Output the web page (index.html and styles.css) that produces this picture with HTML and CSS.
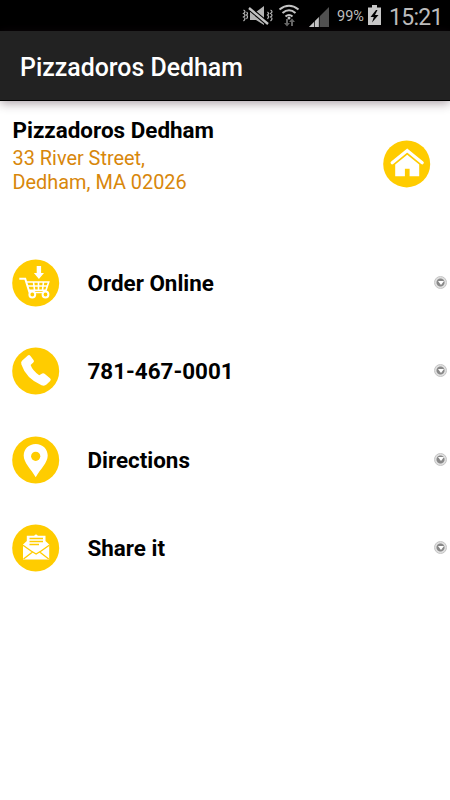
FILE: index.html
```html
<!DOCTYPE html>
<html lang="en">
<head>
<meta charset="utf-8">
<meta name="viewport" content="width=device-width">
<title>Pizzadoros Dedham</title>
<link rel="stylesheet" href="styles.css">
</head>
<body>
<div class="status">
  <svg class="signals" width="94" height="30" viewBox="240 0 94 30" aria-hidden="true">
    <g fill="none" stroke="#b5b5b5" stroke-width="1.2">
      <path d="M243.5 9q3 1.5 0 3.5 3 1.500 0 3.500 3 1.500 0 4M246.500 11q2 1.500 0 3 2 1.500 0 4M267.500 11q2 1.500 0 3 2 1.500 0 4M270.500 9q3 1.500 0 3.500 3 1.500 0 3.500 3 1.500 0 4"/>
    </g>
    <path fill="#b5b5b5" d="M250 11h6l8-6v19l-8-5h-6z"/>
    <path stroke="#000" stroke-width="4.5" d="M249 7l19 16"/>
    <path stroke="#c4c4c4" stroke-width="2.4" d="M249 7l19 16"/>
    <g fill="none" stroke="#c4c4c4" stroke-width="2.1">
      <path d="M279.500 8.500q9.500-7.500 19 0M282.500 12q6.500-5.500 13 0M285.500 15.500q3.500-3 7 0"/>
    </g>
    <circle cx="289" cy="17" r="1.500" fill="#c4c4c4"/>
    <path fill="#666" d="M286 18h2v4h2l-3 3.500-3-3.500h2zM291 25h2v-4h2l-3-3.500-3 3.500h2z"/>
    <path fill="#505050" d="M309 26l20-20v20z"/>
    <path fill="#c4c4c4" d="M309 26l10-10v10z"/>
    <path stroke="#000" stroke-width=".7" d="M314.500 20v6M319.300 15v11"/>
  </svg>
  <span class="percent">99%</span>
  <svg class="battery" width="13" height="21" viewBox="0 0 13 21" aria-hidden="true">
    <path fill="#c8c8c8" d="M4 0h5v2.500h4V20H0V2.500h4z"/>
    <path fill="#000" d="M8 5L2.500 12h3.300L4 17.500l6.500-7.500H7L9.500 5z"/>
  </svg>
  <span class="clock">15:21</span>
</div>
<header class="bar"><h1>Pizzadoros Dedham</h1></header>
<section class="place">
  <div class="address">
    <h2>Pizzadoros Dedham</h2>
    <p>33 River Street,<br>Dedham, MA 02026</p>
  </div>
  <svg class="icon home" viewBox="0 0 48 48" aria-label="Home">
    <circle cx="23.700" cy="23.900" r="23.500"/>
    <path class="line roof" d="M9.200 22.800L24.200 10.500 39.200 22.800"/>
    <path class="solid" d="M24.200 14.800L36.200 24.500V36.200H26.600V28.800H21.900V36.200H12.200V24.500z"/>
  </svg>
</section>
<main class="list">
  <a class="row">
    <svg class="icon" viewBox="0 0 48 48" aria-hidden="true">
      <circle cx="23.700" cy="24" r="23.500"/>
      <path class="solid" d="M24.700 7h4.400v7h2.900l-5.100 6-5-6h2.800z"/>
      <path class="line" d="M7.300 19.800h5.900L17.500 33.500"/>
      <path class="line cage" d="M14.500 23h22.200L34 31.200H17M16 27h19.500M21.500 23l1 8M26.500 23v8M31.500 23l-1 8M18 33.500h17"/>
      <circle class="wheel" cx="20.300" cy="35.500" r="2.900"/>
      <circle class="wheel" cx="33.500" cy="35.500" r="2.900"/>
    </svg>
    <span class="label">Order Online</span>
    <span class="more"><i></i></span>
  </a>
  <a class="row">
    <svg class="icon" viewBox="0 0 48 48" aria-hidden="true">
      <circle cx="23.700" cy="24" r="23.500"/>
      <path class="solid" d="M10 13.700L15.800 8.400Q17.300 7.300 18.500 8.900L21.700 13.200Q22.400 14.500 21.300 15.500L18.600 18Q20.500 23.500 27.200 28.300L30.200 26.500Q31.400 25.800 32.600 26.700L38 31.200Q39.500 32.500 38.200 33.900L34.500 37.600Q32.500 39.300 29.500 38.200 14 31.500 9.400 17.500 8.600 15 10 13.700z"/>
    </svg>
    <span class="label phone">781-467-0001</span>
    <span class="more"><i></i></span>
  </a>
  <a class="row">
    <svg class="icon" viewBox="0 0 48 48" aria-hidden="true">
      <circle cx="23.700" cy="24" r="23.500"/>
      <path class="solid" d="M23.700 8C16.800 8 11.700 13 11.700 19.600 11.700 27 19 33 23.700 41.300 28.400 33 35.700 27 35.700 19.600 35.700 13 30.600 8 23.700 8z"/>
      <circle cx="23.700" cy="20.300" r="4.600"/>
    </svg>
    <span class="label">Directions</span>
    <span class="more"><i></i></span>
  </a>
  <a class="row">
    <svg class="icon" viewBox="0 0 48 48" aria-hidden="true">
      <circle cx="23.700" cy="24" r="23.500"/>
      <path class="solid" d="M11 20.500L14.800 17V11.700H22l2-1.500 2 1.500h7.500V17l3.700 3.500V35.500H11z"/>
      <path class="mark" d="M17.500 14.500H31M17.500 17.500H31M17.500 20.500H27M11 21.200L20.500 28 11.500 35M37.200 21.200L27.700 28 36.700 35M20 27.500l4.100 2.500 4.100-2.500"/>
    </svg>
    <span class="label">Share it</span>
    <span class="more"><i></i></span>
  </a>
</main>
</body>
</html>
```

FILE: styles.css
```css
* { box-sizing: border-box; }
body {
  margin: 0;
  min-height: 800px;
  background: #fff;
  color: #000;
  font-family: Roboto, sans-serif;
}
h1, h2, p { margin: 0; }
.status {
  height: 31px;
  background: #000;
  color: #bcbcbc;
  display: flex;
  align-items: center;
  justify-content: flex-end;
  padding-right: 8px;
}
.percent { width: 28px; margin-left: 3px; font-size: 14.5px; line-height: 30px; margin-top: 3px; }
.battery { margin: 0 8px 0 3px; }
.clock { width: 53px; font-size: 23px; line-height: 30px; margin-top: 4px; letter-spacing: -.7px; }
.bar {
  height: 70px;
  display: flex;
  align-items: center;
  padding: 5px 20px 0;
  background: #222;
  border-bottom: 1px solid #000;
  box-shadow: 0 2px 10px rgba(45, 20, 35, .42);
}
.bar h1 { color: #fff; font-size: 24.900px; font-weight: 500; line-height: 30px; white-space: nowrap; }
.place {
  height: 138px;
  display: flex;
  justify-content: space-between;
  align-items: flex-start;
  padding: 16px 19.500px 0 12.500px;
}
.address h2 { font-size: 22.450px; font-weight: 700; line-height: 26px; }
.address p { margin-top: 4px; color: #d8870b; font-size: 19.900px; line-height: 24px; }
.icon { display: block; flex: none; width: 48px; height: 48px; fill: #fc0; }
.home { margin-top: 23px; }
.solid { fill: #fff; }
.line, .wheel { fill: none; stroke: #fff; stroke-width: 2; }
.roof { stroke-width: 3.200; stroke-linecap: round; }
.cage { stroke-width: 1.600; }
.wheel { fill: #fc0; }
.mark { fill: none; stroke: #fc0; stroke-width: 1.300; }
.list { display: flex; flex-direction: column; }
.row { display: flex; align-items: center; height: 88.300px; padding: 0 3px 0 12px; }
.label { flex: 1; margin-left: 27.500px; font-size: 22.400px; font-weight: 700; line-height: 28px; }
.more {
  display: flex;
  align-items: center;
  justify-content: center;
  width: 13px;
  height: 13px;
  margin-top: -1px;
  border: 1px solid #c4c4c4;
  border-radius: 50%;
  background: radial-gradient(circle, #888 0 3.500px, #e0e0e0 4.500px);
}
.more i { border: 3px solid transparent; border-top: 4px solid #fff; border-bottom: 0; }
```
